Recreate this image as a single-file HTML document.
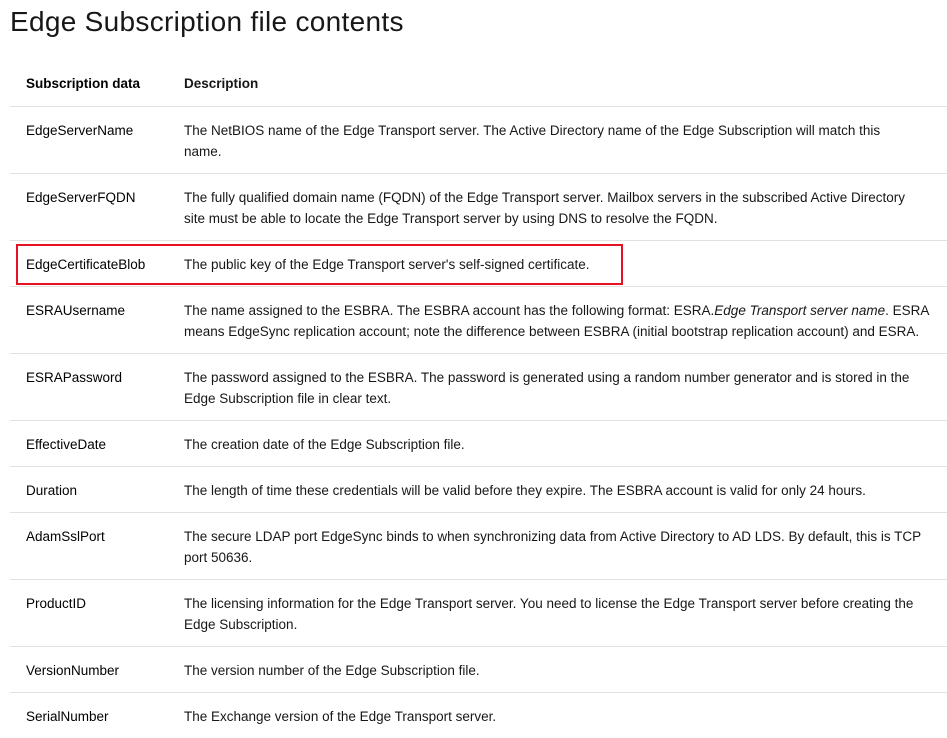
<!DOCTYPE html>
<html><head><style>
body{margin:0;background:#fff;font-family:"Liberation Sans",Arial,sans-serif;color:#171717;width:947px;height:733px;overflow:hidden;position:relative}
h1{position:absolute;left:10px;top:6px;margin:0;font-size:28px;font-weight:normal;letter-spacing:0.3px;color:#171717}
.row{position:absolute;left:10px;width:937px;border-bottom:1px solid #e1e1e1}
.c1{position:absolute;left:16px;font-size:13.5px;line-height:21px;white-space:nowrap;color:#000}
.c2{position:absolute;left:174px;font-size:13.5px;line-height:21px;white-space:nowrap}
.h{font-weight:bold}
.box{position:absolute;left:16px;top:244px;width:603px;height:37px;border:2px solid #e81123}
</style></head><body>
<h1>Edge Subscription file contents</h1>
<div class="row" style="top:60px;height:46px"><div class="c1 h" style="top:13px">Subscription data</div><div class="c2 h" style="top:13px">Description</div></div>
<div class="row" style="top:107px;height:66px"><div class="c1" style="top:13px">EdgeServerName</div><div class="c2" style="top:13px">The NetBIOS name of the Edge Transport server. The Active Directory name of the Edge Subscription will match this<br>name.</div></div>
<div class="row" style="top:174px;height:66px"><div class="c1" style="top:13px">EdgeServerFQDN</div><div class="c2" style="top:13px">The fully qualified domain name (FQDN) of the Edge Transport server. Mailbox servers in the subscribed Active Directory<br>site must be able to locate the Edge Transport server by using DNS to resolve the FQDN.</div></div>
<div class="row" style="top:241px;height:45px"><div class="c1" style="top:13px">EdgeCertificateBlob</div><div class="c2" style="top:13px">The public key of the Edge Transport server's self-signed certificate.</div></div>
<div class="row" style="top:287px;height:66px"><div class="c1" style="top:13px">ESRAUsername</div><div class="c2" style="top:13px">The name assigned to the ESBRA. The ESBRA account has the following format: ESRA.<i>Edge Transport server name</i>. ESRA<br>means EdgeSync replication account; note the difference between ESBRA (initial bootstrap replication account) and ESRA.</div></div>
<div class="row" style="top:354px;height:66px"><div class="c1" style="top:13px">ESRAPassword</div><div class="c2" style="top:13px">The password assigned to the ESBRA. The password is generated using a random number generator and is stored in the<br>Edge Subscription file in clear text.</div></div>
<div class="row" style="top:421px;height:45px"><div class="c1" style="top:13px">EffectiveDate</div><div class="c2" style="top:13px">The creation date of the Edge Subscription file.</div></div>
<div class="row" style="top:467px;height:45px"><div class="c1" style="top:13px">Duration</div><div class="c2" style="top:13px">The length of time these credentials will be valid before they expire. The ESBRA account is valid for only 24 hours.</div></div>
<div class="row" style="top:513px;height:66px"><div class="c1" style="top:13px">AdamSslPort</div><div class="c2" style="top:13px">The secure LDAP port EdgeSync binds to when synchronizing data from Active Directory to AD LDS. By default, this is TCP<br>port 50636.</div></div>
<div class="row" style="top:580px;height:66px"><div class="c1" style="top:13px">ProductID</div><div class="c2" style="top:13px">The licensing information for the Edge Transport server. You need to license the Edge Transport server before creating the<br>Edge Subscription.</div></div>
<div class="row" style="top:647px;height:45px"><div class="c1" style="top:13px">VersionNumber</div><div class="c2" style="top:13px">The version number of the Edge Subscription file.</div></div>
<div class="row" style="top:693px;height:45px;border:none"><div class="c1" style="top:13px">SerialNumber</div><div class="c2" style="top:13px">The Exchange version of the Edge Transport server.</div></div>
<div class="box"></div>
</body></html>
